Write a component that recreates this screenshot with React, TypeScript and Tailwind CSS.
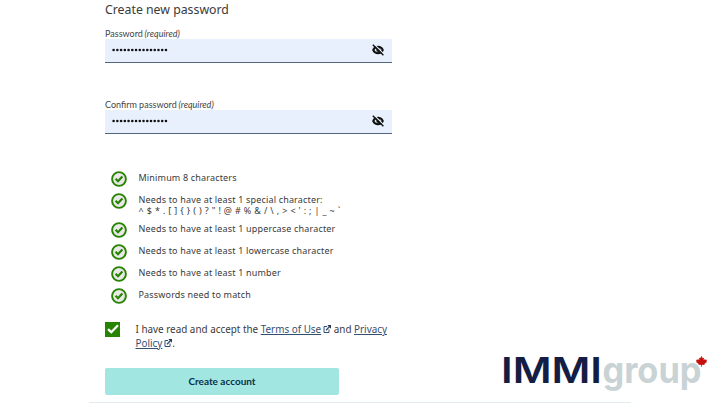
import type { ReactNode } from "react";

const EyeOffIcon = () => (
  <svg viewBox="0 0 14 14" className="h-[14px] w-[14px]" fill="none">
    <path d="M2.200 7c1-2.200 2.800-3.200 4.800-3.200S10.800 4.800 11.800 7c-1 2.200-2.800 3.200-4.800 3.200S3.200 9.200 2.200 7z" stroke="#111" strokeWidth="1.900" />
    <circle cx="7.300" cy="7" r="2" fill="#111" />
    <path d="M3 1.200l9.500 9.500" stroke="#e8f0fe" strokeWidth="1.200" />
    <path d="M1.800 1.800l10.600 10.400" stroke="#111" strokeWidth="1.400" />
  </svg>
);

const CheckCircle = () => (
  <svg viewBox="0 0 16 16" className="h-4 w-4 shrink-0" fill="none">
    <circle cx="8" cy="8" r="6.900" fill="#e9e9e9" stroke="#278400" strokeWidth="1.9" />
    <path d="M4.600 7.800l2.400 2.400 4.400-4.600" stroke="#278400" strokeWidth="2.200" />
  </svg>
);

const ExternalIcon = () => (
  <svg viewBox="0 0 8 8" className="ml-[2px] inline-block h-2 w-2 align-[0px]" fill="none" stroke="#344e70">
    <path d="M4 1.500H1v6h5V4.500" strokeWidth="1" />
    <path d="M3 5.200l3.300-3.500" strokeWidth="1.300" />
    <path d="M4.300 0H8v3.700z" fill="#26374a" stroke="none" />
  </svg>
);

const PasswordField = ({ label }: { label: string }) => (
  <div className="w-[287px]">
    <label className="block h-[11px] font-['Lato'] text-[9px] leading-[12px] whitespace-nowrap text-[#444]">
      {label} <em className="-ml-[0.5px]">(required)</em>
    </label>
    <div className="flex h-6 items-center justify-between border-b border-[#526680] bg-[#e8f0fe] pr-[7px] pl-[7px]">
      <svg viewBox="0 0 56 4" className="mb-[1px] h-1 w-14" fill="#111">
        {Array.from({ length: 15 }, (_, i) => (
          <circle key={i} cx={1.6 + i * 3.74} cy="2" r="1.3" />
        ))}
      </svg>
      <div className="pb-[2px]">
        <EyeOffIcon />
      </div>
    </div>
  </div>
);

const Rule = ({ children, note }: { children: ReactNode; note?: string }) => (
  <li className="flex gap-[11.500px]">
    <CheckCircle />
    <div className={note ? "h-[29.500px]" : "h-[21.900px]"}>
      <p className="h-3 pt-px leading-[11px]">{children}</p>
      {note && <p className="text-[9px] leading-[12px] tracking-[0.35px]">{note}</p>}
    </div>
  </li>
);

const Logo = () => (
  <svg viewBox="0 -10 218 63" className="h-[63px] w-[218px]">
    <text x="1" y="32.500" fill="#141d43" fontFamily="Inter, sans-serif" fontWeight="600" fontSize="36" textLength="101" lengthAdjust="spacingAndGlyphs">
      IMMI
    </text>
    <text x="102.500" y="32.500" fill="#c9d3d5" fontFamily="Inter, sans-serif" fontWeight="700" fontSize="36" textLength="99" lengthAdjust="spacingAndGlyphs">
      group
    </text>
    <path
      d="M201.500 6l1.300 2.300 1.200-.6-.3 2.400 1.500-1.200.4 1.100 1.400-.2-.6 1.700.6.500-2.700 2.100.2 1-2.600-.3v1.900h-.8v-1.900l-2.600.3.200-1-2.700-2.100.6-.5-.6-1.700 1.400.2.400-1.100 1.500 1.200-.3-2.400 1.200.6z"
      fill="#c8100e"
    />
  </svg>
);

export default function App() {
  return (
    <main className="relative h-[403px] w-[718px] overflow-hidden bg-white font-['Noto_Sans',sans-serif] text-[#3a3a3a]">
      <div className="flex flex-col items-start pl-[105px]">
        <h1 className="h-[18px] pt-px text-[12.300px] leading-[18px]">Create new password</h1>
        <div className="mt-[10px]">
          <PasswordField label="Password" />
        </div>
        <div className="mt-9">
          <PasswordField label="Confirm password" />
        </div>
        <ul className="mt-[37px] ml-[6px] flex flex-col text-[9px] tracking-[0.170px] whitespace-nowrap">
          <Rule>Minimum 8 characters</Rule>
          <Rule note={"^ $ * . [ ] { } ( ) ? \" ! @ # % & / \\ , > < ' : ; | _ ~ `"}>
            Needs to have at least 1 special character:
          </Rule>
          <Rule>Needs to have at least 1 uppercase character</Rule>
          <Rule>Needs to have at least 1 lowercase character</Rule>
          <Rule>Needs to have at least 1 number</Rule>
          <Rule>Passwords need to match</Rule>
        </ul>
        <div className="mt-3 flex gap-[15.500px]">
          <div className="flex h-[15px] w-[15px] items-center justify-center bg-[#278400]">
            <svg viewBox="0 0 12 12" className="h-3 w-3" fill="none" stroke="white" strokeWidth="2.300">
              <path d="M1 6.200l3.300 3 6.700-7" />
            </svg>
          </div>
          <p className="text-[9.900px] leading-[14px] whitespace-nowrap">
            I have read and accept the <a className="text-[#344e70] underline">Terms of Use</a>
            <ExternalIcon /> and <a className="text-[#344e70] underline">Privacy</a>
            <br />
            <a className="text-[#344e70] underline">Policy</a>
            <ExternalIcon />.
          </p>
        </div>
        <button className="mt-[18px] h-[27px] w-[234px] rounded-[2px] bg-[#a1e6e0] font-['Lato'] text-[10px] font-bold text-[#08304b]">
          Create account
        </button>
      </div>
      <div className="absolute top-[402px] left-[89px] h-px w-[542px] bg-[#e1ecef]" />
      <div className="absolute top-[340px] left-[500px]">
        <Logo />
      </div>
    </main>
  );
}
